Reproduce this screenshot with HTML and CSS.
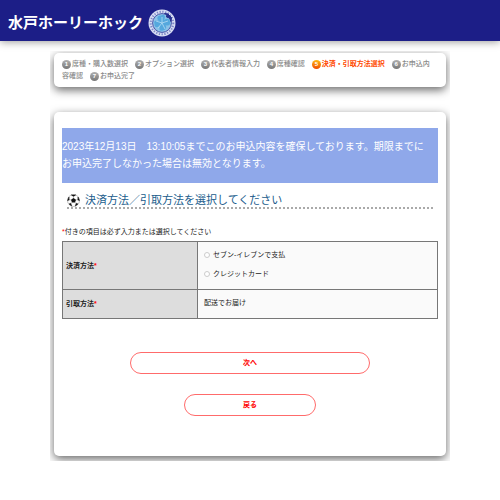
FILE: index.html
```
<!DOCTYPE html>
<html lang="ja">
<head>
<meta charset="utf-8">
<meta name="viewport" content="width=device-width, initial-scale=1">
<title>水戸ホーリーホック</title>
<link rel="stylesheet" href="styles.css">
</head>
<body>
<header class="site-header">
  <span class="site-name">水戸ホーリーホック</span>
  <svg class="emblem" viewBox="0 0 28 28" aria-hidden="true">
    <circle cx="14" cy="14" r="13.5" fill="#d9def3"/>
    <circle cx="14" cy="14" r="11.3" fill="none" stroke="#7c86c8" stroke-width="2" stroke-dasharray="1.3 1.5"/>
    <circle cx="14" cy="14" r="9.4" fill="#8cc3e8" stroke="#4a55a8"/>
    <path d="M14 14C8 12 8 6 13 6.500C17 4 19 9 14 14C17 8 22 9 22 13C23 17 19 18 14 14C20 16 19 21 15 21.500C11 23 10 19 14 14C11 20 6 19 6.500 15C5 11 9 10 14 14Z" fill="#55a8dd"/>
    <path d="M14 14V8M14 14L20 12M14 14L17 20M14 14L10 19M14 14L8 12" stroke="#b5dcf4" stroke-width=".8"/>
    <path d="M16.500 4.500L19 5.500L18.500 8L21.500 9L23 12.500L23.500 8.500L20 5Z" fill="#26308f" stroke="#26308f"/>
  </svg>
</header>
<main class="page">
  <ol class="card steps">
    <li><span class="num">1</span><span>席種・購入数選択</span></li>
    <li><span class="num">2</span><span>オプション選択</span></li>
    <li><span class="num">3</span><span>代表者情報入力</span></li>
    <li><span class="num">4</span><span>席種確認</span></li>
    <li class="current" aria-current="step"><span class="num">5</span><span>決済・引取方法選択</span></li>
    <li><span class="num">6</span><span>お申込内容確認</span></li>
    <li><span class="num">7</span><span>お申込完了</span></li>
  </ol>
  <form class="card order">
    <p class="notice">2023年12月13日　13:10:05までこのお申込内容を確保しております。期限までにお申込完了しなかった場合は無効となります。</p>
    <h1 class="title">
      <svg class="ball" viewBox="0 0 13 13" aria-hidden="true">
        <circle cx="6.500" cy="6.500" r="6" fill="#fff" stroke="#999" stroke-width=".6"/>
        <path d="M6.500 4L9 5.800L8 8.600H5L4 5.800Z" fill="#111"/>
        <path d="M4.300 .9H8.700L6.500 2.400ZM11 3L12.500 6.500L10.800 6ZM2 3L.5 6.500L2.200 6ZM2 10L3.800 9.200L4.700 12ZM11 10L9.200 9.200L8.300 12Z" fill="#111" stroke="#111" stroke-width=".5"/>
        <path d="M6.500 2.400V4M9 5.800L10.800 6M8 8.600L9.200 9.200M5 8.600L3.800 9.200M4 5.800L2.200 6" stroke="#888" stroke-width=".5"/>
      </svg>
      決済方法／引取方法を選択してください
    </h1>
    <p class="hint"><span class="req">*</span>付きの項目は必ず入力または選択してください</p>
    <table class="fields">
      <tr class="payment">
        <th scope="row" id="pay">決済方法<span class="req">*</span></th>
        <td>
          <div class="options" role="radiogroup" aria-labelledby="pay">
            <label><input type="radio" name="pay" value="seven">セブン-イレブンで支払</label>
            <label><input type="radio" name="pay" value="card">クレジットカード</label>
          </div>
        </td>
      </tr>
      <tr class="delivery">
        <th scope="row">引取方法<span class="req">*</span></th>
        <td>配送でお届け</td>
      </tr>
    </table>
    <div class="actions">
      <button class="next" type="submit">次へ</button>
      <button class="back" type="button">戻る</button>
    </div>
  </form>
</main>
</body>
</html>
```
FILE: styles.css
```
* {
  box-sizing: border-box;
}

body {
  margin: 0;
  background: #fff;
  color: #222;
  font: 7px/12px "Liberation Sans", "Noto Sans CJK JP", sans-serif;
}

.site-header {
  position: relative;
  display: flex;
  align-items: center;
  height: 41px;
  padding: 5px 8px 0;
  background: #1c1e87;
  box-shadow: 0 1px 8px rgba(0, 0, 0, .4);
  color: #fff;
}

.site-name {
  font-size: 15px;
  font-weight: 700;
  line-height: 20px;
}

.emblem {
  width: 28px;
  height: 28px;
  margin-left: 5px;
}

.page {
  width: 80%;
  margin: 10px auto 0;
  padding: 2px 4px 5px;
  overflow: hidden;
}

.card {
  border-radius: 5px;
  background: #fff;
  box-shadow: 0 3px 10px rgba(0, 0, 0, .6);
}

.steps {
  margin: 0 0 25px;
  padding: 5px 12px 5px 8px;
  list-style: none;
  color: #888;
  font-weight: 500;
}

.steps li {
  display: inline;
  margin-right: 5px;
}

.steps .current {
  color: #ff4a00;
  font-weight: 700;
}

.num {
  display: inline-block;
  width: 9px;
  height: 9px;
  margin-right: 1px;
  border-radius: 50%;
  background: linear-gradient(#b0b0b0, #777);
  color: #fff;
  font-size: 6px;
  font-weight: 700;
  line-height: 9px;
  text-align: center;
}

.current .num {
  background: linear-gradient(#ffba16, #f04c00);
}

.order {
  padding: 16px 8px 40px;
}

.notice {
  margin: 0;
  padding: 10px 6px 11px 0;
  background: #8fa8ea;
  color: #fff;
  font-size: 10px;
  line-height: 17px;
}

.title {
  display: flex;
  align-items: center;
  gap: 5px;
  margin: 10px 5px 17px;
  border-bottom: 2px dotted #aaa;
  color: #215c8c;
  font-size: 11px;
  font-weight: 400;
  line-height: 14px;
}

.ball {
  width: 13px;
  height: 13px;
}

.hint {
  margin: 0 0 3px;
}

.req {
  color: #f00;
}

.fields {
  width: 100%;
  border-collapse: collapse;
  table-layout: fixed;
}

.fields th,
.fields td {
  padding: 0 6px;
  border: 1px solid #777;
  text-align: left;
}

.fields th {
  width: 36%;
  padding: 0 3px;
  background: #ddd;
  font-weight: 700;
}

.fields td {
  padding-bottom: 2px;
  background: #fafafa;
}

.payment {
  height: 48px;
}

.delivery {
  height: 29px;
}

.options {
  display: grid;
  gap: 7px;
}

.options label {
  display: flex;
  align-items: center;
  gap: 3px;
}

.options input {
  appearance: none;
  width: 6px;
  height: 6px;
  margin: 0;
  border: 1px solid #ccc;
  border-radius: 50%;
  background: #fff;
}

.options input:checked {
  background: #555;
}

.actions {
  display: grid;
  justify-items: center;
  gap: 20px;
  margin-top: 33px;
}

.actions button {
  height: 22px;
  border: 1px solid #ff6b6b;
  border-radius: 11px;
  background: #fff;
  color: #f00;
  font: inherit;
  font-weight: 700;
}

.next {
  width: 64%;
}

.back {
  width: 35%;
}
```
